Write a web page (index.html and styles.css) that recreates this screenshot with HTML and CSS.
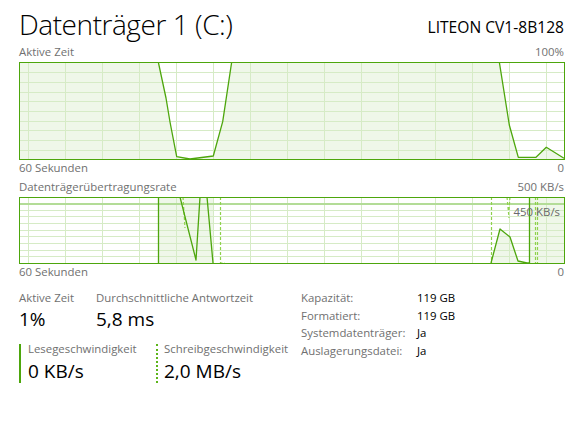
FILE: index.html
```html
<!DOCTYPE html>
<html lang="de">
<head>
<meta charset="utf-8">
<title>Datenträger 1 (C:)</title>
<link rel="stylesheet" href="styles.css">
</head>
<body>
<div class="page">
  <div class="header">
    <h1 class="title">Datenträger 1 (C:)</h1>
    <div class="model">LITEON CV1-8B128</div>
  </div>

  <div class="axis-row top"><span>Aktive Zeit</span><span>100%</span></div>
  <div class="chart">
    <svg class="graph" width="546" height="98" viewBox="0 0 546 98">
      <rect class="bg" x="0" y="0" width="546" height="98"/>
      <polygon class="fill" points="0,0 139.3,0 147,36 151,60 157.7,94.7 171,97 194.3,94 203.7,59.7 212.7,0 480.3,0 490.3,63 499.3,95.3 517,95.3 527.3,85.3 545,96.3 545,97.5 0,97.5"/>
      <path class="grid" d="M9.5 0V98M46.5 0V98M83.5 0V98M120.5 0V98M157.5 0V98M194.5 0V98M231.5 0V98M268.5 0V98M305.5 0V98M342.5 0V98M379.5 0V98M416.5 0V98M453.5 0V98M490.5 0V98M527.5 0V98M0 10.5H546M0 20.5H546M0 30.5H546M0 39.5H546M0 49.5H546M0 59.5H546M0 68.5H546M0 78.5H546M0 88.5H546"/>
      <polyline class="line" points="139.3,0 147,36 151,60 157.7,94.7 171,97 194.3,94 203.7,59.7 212.7,0"/>
      <polyline class="line" points="480.3,0 490.3,63 499.3,95.3 517,95.3 527.3,85.3 545,96.3"/>
      <rect class="frame" x="0.5" y="0.5" width="545" height="97"/>
    </svg>
  </div>
  <div class="axis-row bottom"><span>60 Sekunden</span><span>0</span></div>

  <div class="axis-row top gap"><span>Datenträgerübertragungsrate</span><span>500 KB/s</span></div>
  <div class="chart">
    <svg class="graph" width="546" height="67" viewBox="0 0 546 67">
      <rect class="bg" x="0" y="0" width="546" height="67"/>
      <rect class="fill" x="139" y="0" width="55" height="67"/>
      <polygon class="fill" points="472,66 481,32 491,40 499,64 508,66"/>
      <rect class="fill" x="510" y="0" width="36" height="67"/>
      <path class="grid" d="M9.5 0V67M46.5 0V67M83.5 0V67M120.5 0V67M157.5 0V67M194.5 0V67M231.5 0V67M268.5 0V67M305.5 0V67M342.5 0V67M379.5 0V67M416.5 0V67M453.5 0V67M490.5 0V67M527.5 0V67M0 13.5H546M0 19.5H546M0 26.5H546M0 33.5H546M0 39.5H546M0 46.5H546M0 53.5H546M0 59.5H546"/>
      <path class="maxline" d="M0 7H546"/>
      <path class="dash" d="M164 0L166 31M201.5 0V66H206M472.5 0V66M488 0L490 21M491 0L490 13M516.5 0V66M518.5 0V66"/>
      <path class="line" d="M139.5 0V66M161 0L177 63L181 0M188 0L194 66"/>
      <polyline class="line" points="472,66 481,32 491,40 499,64 508,66 510.5,66 510.5,0"/>
      <rect class="frame" x="0.5" y="0.5" width="545" height="66"/>
    </svg>
    <span class="overlay">450 KB/s</span>
  </div>
  <div class="axis-row bottom low"><span>60 Sekunden</span><span>0</span></div>

  <div class="stats">
    <div class="stats-left">
      <div class="stat-row">
        <div class="stat first">
          <div class="label">Aktive Zeit</div>
          <div class="value">1%</div>
        </div>
        <div class="stat">
          <div class="label">Durchschnittliche Antwortzeit</div>
          <div class="value">5,8 ms</div>
        </div>
      </div>
      <div class="stat-row speeds">
        <div class="stat read">
          <div class="label">Lesegeschwindigkeit</div>
          <div class="value">0 KB/s</div>
        </div>
        <div class="stat write">
          <div class="label">Schreibgeschwindigkeit</div>
          <div class="value">2,0 MB/s</div>
        </div>
      </div>
    </div>
    <dl class="props">
      <dt>Kapazität:</dt><dd>119 GB</dd>
      <dt>Formatiert:</dt><dd>119 GB</dd>
      <dt>Systemdatenträger:</dt><dd>Ja</dd>
      <dt>Auslagerungsdatei:</dt><dd>Ja</dd>
    </dl>
  </div>
</div>
</body>
</html>
```
FILE: styles.css
```css
* { box-sizing: border-box; }
html, body { margin: 0; padding: 0; background: #ffffff; }
body {
  font-family: "Open Sans", "Noto Sans", "Liberation Sans", sans-serif;
  font-size: 11.4px;
  color: #000;
}
.page {
  width: 579px;
  padding: 6px 15px 0 19px;
}
.header {
  display: flex;
  justify-content: space-between;
  align-items: flex-start;
  height: 38px;
}
.title {
  margin: 0;
  font-size: 28px;
  font-weight: 300;
  line-height: 36px;
  letter-spacing: -0.45px;
  color: #000;
}
.model {
  padding-top: 11px;
  font-size: 15.6px;
  line-height: 20px;
  color: #000;
}
.axis-row {
  display: flex;
  justify-content: space-between;
  color: #707070;
  font-size: 11.4px;
}
.axis-row.top { line-height: 16px; }
.axis-row.bottom { line-height: 16px; }
.axis-row.gap { margin-top: 3px; }
.axis-row.low { margin-top: 0; }
.chart {
  position: relative;
  width: 546px;
  margin-top: 2px;
}
.graph { display: block; }
.bg { fill: #ffffff; }
.fill { fill: #eff7e9; }
.grid { stroke: #d6ebc6; stroke-width: 1; fill: none; }
.maxline { stroke: #b3dc97; stroke-width: 2; fill: none; }
.line { stroke: #4da60c; stroke-width: 1.3; fill: none; stroke-linejoin: round; }
.dash { stroke: #8fd24c; stroke-width: 1.2; fill: none; stroke-dasharray: 3 2; }
.frame { stroke: #4da60c; stroke-width: 1; fill: none; }
.overlay {
  position: absolute;
  right: 5px;
  top: 7px;
  line-height: 16px;
  color: #6a6a6a;
  font-size: 11.4px;
}
.stats {
  display: flex;
  align-items: flex-start;
  margin-top: 9px;
}
.stats-left {
  width: 282px;
}
.stat-row { display: flex; }
.stat .label {
  color: #707070;
  font-size: 11.4px;
  line-height: 17px;
  white-space: nowrap;
}
.stat .value {
  font-size: 19px;
  line-height: 27px;
  color: #000;
  white-space: nowrap;
}
.stat.first { width: 77px; }
.speeds { margin-top: 11px; }
.speeds .stat .label { line-height: 9px; }
.speeds .stat .value { line-height: 26px; margin-top: 5px; }
.stat.read {
  width: 137px;
  border-left: 2px solid #4da60c;
  padding-left: 7px;
  height: 39px;
}
.stat.write {
  border-left: 2px dotted #5cb51a;
  padding-left: 6px;
  height: 39px;
}
.props {
  margin: 0;
  display: grid;
  grid-template-columns: 116px auto;
  align-content: start;
  line-height: 17.7px;
  font-size: 11.4px;
}
.props dt { color: #707070; }
.props dd { margin: 0; color: #000; }
```
